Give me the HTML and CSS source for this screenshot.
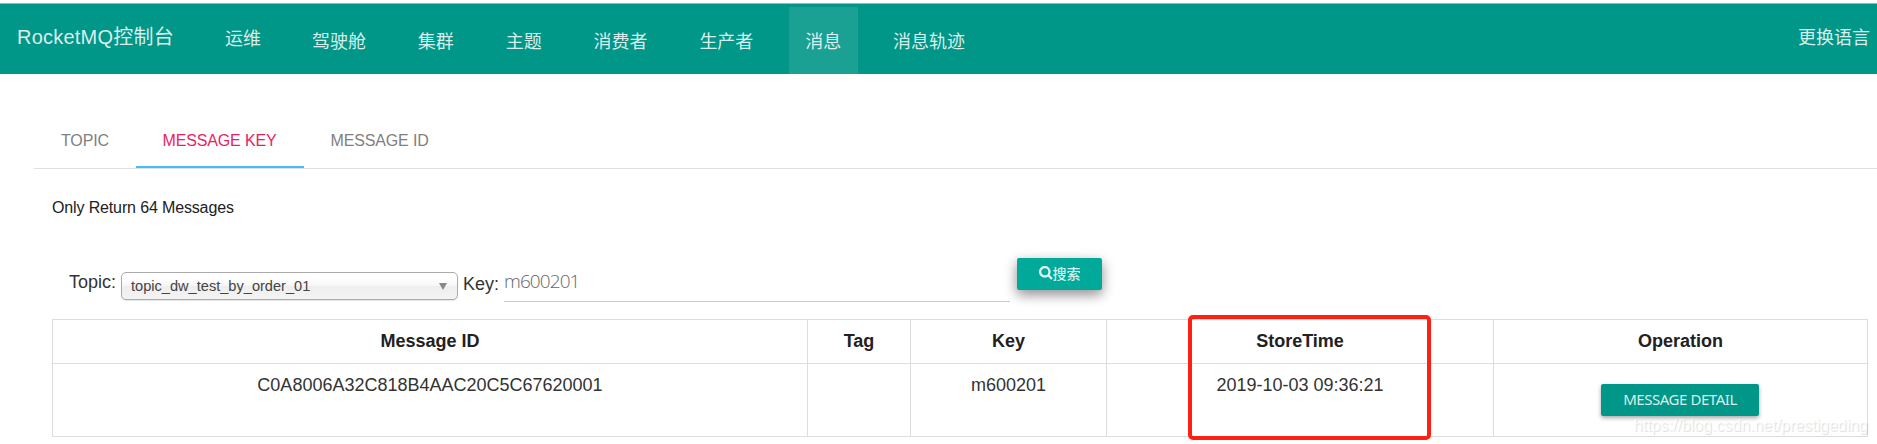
FILE: index.html
```html
<!DOCTYPE html>
<html lang="zh">
<head>
<meta charset="utf-8">
<title>RocketMQ控制台</title>
<link rel="stylesheet" href="styles.css">
</head>
<body>
<header class="navbar">
  <a class="brand">RocketMQ控制台</a>
  <nav class="nav">
    <a class="nav-item nav-first">运维</a>
    <a class="nav-item">驾驶舱</a>
    <a class="nav-item">集群</a>
    <a class="nav-item">主题</a>
    <a class="nav-item">消费者</a>
    <a class="nav-item">生产者</a>
    <a class="nav-item active">消息</a>
    <a class="nav-item">消息轨迹</a>
  </nav>
  <a class="language">更换语言</a>
</header>
<main class="content">
  <div class="tabs">
    <a class="tab">TOPIC</a>
    <a class="tab selected">MESSAGE KEY</a>
    <a class="tab">MESSAGE ID</a>
  </div>
  <section class="panel">
    <h5 class="hint">Only Return 64 Messages</h5>
    <form class="search">
      <label class="label">Topic:</label>
      <div class="select"><span>topic_dw_test_by_order_01</span>
        <svg class="arrow" viewBox="0 0 8 7"><path d="M0 0h8L4 7z"/></svg>
      </div>
      <label class="label key-label">Key:</label>
      <div class="input">m600201</div>
      <button type="button" class="btn btn-search"><svg class="glass" viewBox="0 0 14 14"><circle cx="5.8" cy="5.8" r="4.7"/><path d="M9.2 9.2l3.8 3.8"/></svg><span class="btn-text">搜索</span></button>
    </form>
    <div class="table-wrap">
      <table class="table">
        <colgroup><col class="c-id"><col class="c-tag"><col class="c-key"><col class="c-time"><col class="c-op"></colgroup>
        <tr class="head"><th>Message ID</th><th>Tag</th><th>Key</th><th>StoreTime</th><th>Operation</th></tr>
        <tr class="row"><td>C0A8006A32C818B4AAC20C5C67620001</td><td></td><td>m600201</td><td>2019-10-03 09:36:21</td><td class="op"><button type="button" class="btn btn-detail">MESSAGE DETAIL</button></td></tr>
      </table>
      <div class="highlight"></div>
      <div class="watermark">https://blog.csdn.net/prestigeding</div>
    </div>
  </section>
</main>
</body>
</html>
```
FILE: styles.css
```css
* { box-sizing: border-box; }
body {
  margin: 0;
  padding-top: 3px;
  height: 444px;
  overflow: hidden;
  background: #fff;
  color: #333;
  font-family: "Liberation Sans", "Noto Sans CJK SC", sans-serif;
}
.navbar {
  display: flex;
  height: 71px;
  border-top: 1px solid #a9b0af;
  background: #009688;
  color: rgba(255, 255, 255, .86);
  line-height: 24px;
}
.brand { width: 209px; flex: none; padding: 21px 0 0 17px; font-size: 20px; letter-spacing: .22px; white-space: nowrap; }
.nav { display: flex; gap: 19px; padding-top: 3px; font-size: 18px; }
.nav-item { padding: 23px 16.85px 0 16px; height: 67px; white-space: nowrap; }
.nav-first { padding-top: 20px; padding-right: 16px; }
.active { background: #1aa193; }
.language { margin-left: auto; padding: 22px 7px 0 0; font-size: 18px; }
.content { padding: 44px 0 0 34px; }
.tabs { display: flex; height: 51px; border-bottom: 1px solid #e0e0e0; }
.tab { padding: 13px 26px 0 26.5px; font-size: 16px; line-height: 20px; letter-spacing: -.14px; color: #808080; white-space: nowrap; }
.tab:first-child { width: 102px; padding-left: 27px; }
.selected { width: 168px; color: #e91e63; border-bottom: 2px solid #45bcf8; }
.panel { padding-left: 18px; }
.hint { margin: 29px 0 0; font-size: 16px; line-height: 20px; font-weight: 400; color: #212121; letter-spacing: -.14px; }
.search { display: flex; height: 101px; padding: 40px 0 0 17px; }
.label { width: 52px; padding-top: 13px; font-size: 18px; line-height: 22px; }
.key-label { width: 46px; padding: 15px 0 0 5px; }
.select {
  display: flex; justify-content: space-between; align-items: center;
  width: 337px; height: 28px; margin-top: 14px; padding: 0 10px 0 9px;
  border: 1px solid #aaa; border-radius: 5px;
  background: linear-gradient(#fff 20%, #f6f6f6 50%, #eee 52%, #f4f4f4);
  box-shadow: 0 1px 1px rgba(0, 0, 0, .1);
  color: #444; font-size: 14.6px; line-height: 20px;
}
.arrow { width: 8px; height: 7px; fill: #888; }
.input {
  width: 506px; height: 44px; padding: 10px 0 0 0;
  border-bottom: 1px solid #ccc;
  font: 300 19px/26px "Open Sans", sans-serif; letter-spacing: -.9px; color: #666;
}
.btn { border: 0; border-radius: 2px; height: 32px; padding: 0; color: rgba(255, 255, 255, .86); }
.btn-search {
  display: flex; align-items: center; justify-content: center;
  width: 85px; margin-left: 7px; background: #00a99a;
  box-shadow: 0 5px 11px rgba(0, 0, 0, .28), 0 4px 15px rgba(0, 0, 0, .2);
  font: 500 14px/20px "Noto Sans CJK SC", sans-serif;
}
.btn-text { padding-bottom: 2px; }
.glass { width: 14px; height: 14px; margin-top: -3px; fill: none; stroke: #d9f2f0; stroke-width: 2.4; }
.table-wrap { position: relative; width: 1816px; }
.table { width: 1816px; table-layout: fixed; border-collapse: collapse; font-size: 18px; line-height: 24px; text-align: center; }
.table th, .table td { border: 1px solid #ddd; padding: 9px 8px; vertical-align: top; }
.table th { color: #212121; }
.head { height: 44px; }
.row { height: 73px; }
.c-id { width: 755px; }
.c-tag { width: 103px; }
.c-key { width: 196px; }
.c-time { width: 387px; }
.c-op { width: 374px; }
.table .op { padding: 20px 2px 0 0; }
.btn-detail {
  display: block; width: 158px; padding: 0 0 2px 1px; margin: 0 auto; background: #009688;
  box-shadow: 0 2px 4px rgba(0, 0, 0, .35);
  font: 15px/20px "Noto Sans", sans-serif; letter-spacing: -.45px;
}
.highlight { position: absolute; left: 1136px; top: -4px; width: 243px; height: 125px; border: 4px solid #ff2012; border-radius: 5px; }
.watermark { position: absolute; right: 0; bottom: 0; font-size: 16px; line-height: 22px; letter-spacing: -.02px; color: rgba(255, 255, 255, .8); text-shadow: 1px 1px 1px rgba(0, 0, 0, .14); }
```
